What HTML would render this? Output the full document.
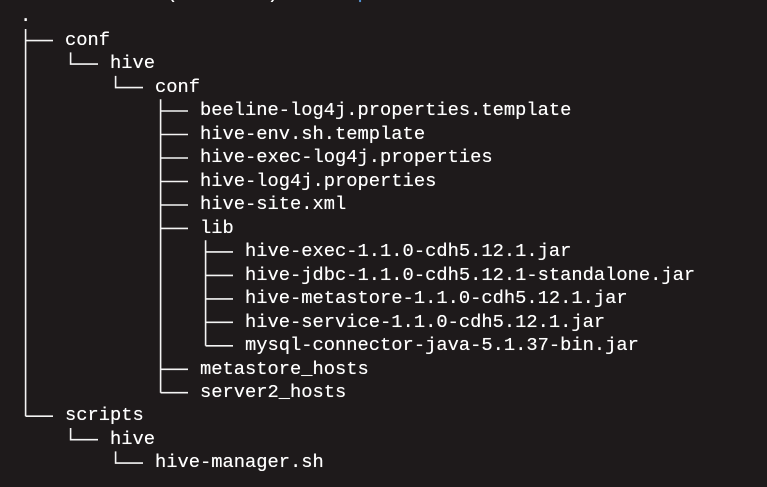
<!DOCTYPE html>
<html><head><style>
html,body{margin:0;padding:0;background:#1e1a1b;width:767px;height:487px;overflow:hidden}
pre{position:absolute;left:20px;top:-18px;margin:0;font-family:"Liberation Mono","DejaVu Sans Mono",monospace;font-size:18.75px;line-height:23.47px;color:#fff;letter-spacing:0;text-shadow:0 0 0.4px #fff}
.r{color:#e0443e}.b{color:#4a8fd6}
svg{position:absolute;left:0;top:0}
</style></head><body>
<svg width="767" height="487" stroke="#f4f4f4" stroke-width="1.6" fill="none">
<path d="M25.6 29V416.2M25.6 40.6H53M25.6 416.2H53"/>
<path d="M70.6 52.4V64.1H98M70.6 428V439.7H98"/>
<path d="M115.6 75.9V87.6H143M115.6 451.4V463.1H143"/>
<path d="M160.6 99.3V392.7M160.6 111H188M160.6 134.5H188M160.6 158H188M160.6 181.5H188M160.6 205H188M160.6 228.4H188M160.6 369.3H188M160.6 392.7H188"/>
<path d="M205.6 240.2V345.8M205.6 251.9H233M205.6 275.4H233M205.6 298.9H233M205.6 322.3H233M205.6 345.8H233"/>
</svg>
<pre>   <span class="r">mkd</span><span class="b">ir</span>     (        )  <span class="b">     p</span>
.
    conf
        hive
            conf
                beeline-log4j.properties.template
                hive-env.sh.template
                hive-exec-log4j.properties
                hive-log4j.properties
                hive-site.xml
                lib
                    hive-exec-1.1.0-cdh5.12.1.jar
                    hive-jdbc-1.1.0-cdh5.12.1-standalone.jar
                    hive-metastore-1.1.0-cdh5.12.1.jar
                    hive-service-1.1.0-cdh5.12.1.jar
                    mysql-connector-java-5.1.37-bin.jar
                metastore_hosts
                server2_hosts
    scripts
        hive
            hive-manager.sh
</pre>
</body></html>
